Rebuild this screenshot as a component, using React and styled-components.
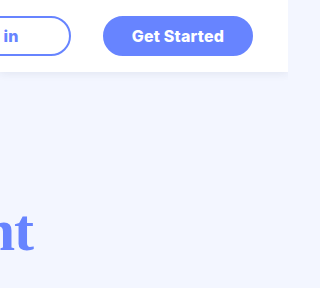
import styled, { createGlobalStyle } from "styled-components";

const GlobalStyle = createGlobalStyle`
  body {
    margin: 0;
    background-color: #f3f6ff;
    font-family: "Inter", "Noto Sans", sans-serif;
    overflow: hidden;
  }
`;

const Page = styled.div`
  width: 288px;
  height: 288px;
  overflow: hidden;
  background-color: #f3f6ff;
`;

const Header = styled.header`
  height: 72px;
  background-color: #ffffff;
  box-shadow: 0 2px 8px rgba(40, 50, 90, 0.08);
  display: flex;
  align-items: center;
  justify-content: flex-end;
  gap: 32px;
  padding-right: 35px;
  overflow: hidden;
  position: relative;
  z-index: 1;
`;

const Button = styled.button`
  flex-shrink: 0;
  height: 40px;
  border-radius: 20px;
  border: 2px solid #6784ff;
  background-color: ${(p) => (p.$filled ? "#6784ff" : "#ffffff")};
  color: ${(p) => (p.$filled ? "#ffffff" : "#6784ff")};
  font-family: "Inter", "Noto Sans", sans-serif;
  font-weight: 800;
  font-size: 16px;
  letter-spacing: 0.2px;
  white-space: nowrap;
  padding: 0;
  width: ${(p) => p.$width}px;
  cursor: pointer;
`;

const Hero = styled.main`
  display: flex;
  justify-content: flex-end;
  padding: 128px 255px 0 0;
  overflow: hidden;
`;

const Title = styled.h1`
  margin: 0;
  flex-shrink: 0;
  white-space: nowrap;
  font-family: "Liberation Serif", "DejaVu Serif", serif;
  font-weight: 700;
  font-size: 60px;
  line-height: 60px;
  letter-spacing: -1px;
  color: #6784ff;
`;

export default function App() {
  return (
    <Page>
      <GlobalStyle />
      <Header>
        <Button $width={160}>Sign in</Button>
        <Button $filled $width={150}>
          Get Started
        </Button>
      </Header>
      <Hero>
        <Title>Project Management</Title>
      </Hero>
    </Page>
  );
}
